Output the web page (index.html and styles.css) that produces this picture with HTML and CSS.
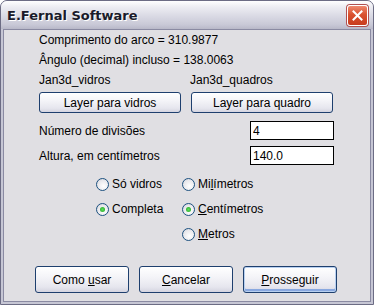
FILE: index.html
```html
<html lang="pt">
  <head>
    <meta charset="UTF-8" />
    <title>E.Fernal Software</title>
    <link rel="stylesheet" href="styles.css">
  </head>
  <body>
    <div class="window">
      <div class="titlebar">
        <span class="title">E.Fernal Software</span>
        <span class="close">
          <svg width="11" height="11" viewBox="0 0 11 11">
            <path d="M1.5 1.5 L9.5 9.5 M9.5 1.5 L1.5 9.5" stroke="#fff" stroke-width="2" stroke-linecap="square" />
          </svg>
        </span>
      </div>

      <div class="client">
        <div class="line">Comprimento do arco = 310.9877</div>
        <div class="line">Ângulo (decimal) incluso = 138.0063</div>
        <div class="pair">
          <div class="line">Jan3d_vidros</div>
          <div class="line">Jan3d_quadros</div>
        </div>
        <div class="pair">
          <button class="btn layer">Layer para vidros</button>
          <button class="btn layer">Layer para quadro</button>
        </div>

        <div class="field first">
          <span>Número de divisões</span>
          <input type="text" value="4" />
        </div>
        <div class="field">
          <span>Altura, em centímetros</span>
          <input type="text" value="140.0" />
        </div>

        <div class="options">
          <label class="radio"><span class="dot"></span><span>Só vidros</span></label>
          <label class="radio"><span class="dot"></span><span>Mi<u>l</u>ímetros</span></label>
          <label class="radio"><span class="dot on"></span><span>Completa</span></label>
          <label class="radio"><span class="dot on"></span><span><u>C</u>entímetros</span></label>
          <span></span>
          <label class="radio"><span class="dot"></span><span><u>M</u>etros</span></label>
        </div>

        <div class="actions">
          <button class="btn big">Como <u>u</u>sar</button>
          <button class="btn big"><u>C</u>ancelar</button>
          <button class="btn big default"><u>P</u>rosseguir</button>
        </div>
      </div>
    </div>
  </body>
</html>
```

FILE: styles.css
```css
body {
  background-color: #fff;
  margin: 0;
}

.window {
  background-color: #c6c6d4;
  border: 1px solid #6c6c84;
  border-radius: 7px 7px 0 0;
  box-sizing: border-box;
  display: flex;
  flex-direction: column;
  font-family: "Liberation Sans", Arial, sans-serif;
  font-size: 12px;
  height: 305px;
  overflow: hidden;
  width: 374px;
}

.titlebar {
  align-items: center;
  background: linear-gradient(#ffffff, #eeeef3 20%, #dcdce6 50%, #c8c8d6 85%, #b8b8c8);
  display: flex;
  height: 28px;
  justify-content: space-between;
  padding: 0 5px 0 6px;
}

.title {
  color: #1a1a2a;
  font-family: "DejaVu Sans", sans-serif;
  font-size: 13px;
  font-weight: bold;
  text-shadow: 1px 1px 0 #fff;
}

.close {
  align-items: center;
  background: linear-gradient(#ee8a70, #d9512f 45%, #c83c1e);
  border: 1px solid #fff;
  border-radius: 3px;
  box-shadow: 0 0 0 1px #b05050;
  display: flex;
  height: 19px;
  justify-content: center;
  width: 19px;
}

.client {
  background-color: #e0dfe3;
  border: 1px solid #8a8aa2;
  flex: 1;
  margin: 0 2px 2px;
  padding: 0 0 0 35px;
}

.line {
  height: 20px;
  line-height: 20px;
}

.pair {
  display: flex;
  gap: 10px;
}

.pair .line {
  width: 141px;
}

.btn {
  background: linear-gradient(#ffffff, #f4f4f8 40%, #e6e6ee 80%, #d4d4e0);
  border: 1px solid #1e3f6e;
  border-radius: 3px;
  color: #000;
  font-family: "Liberation Sans", Arial, sans-serif;
  font-size: 12px;
  padding: 0;
}

.layer {
  height: 21px;
  margin-top: 2px;
  width: 142px;
}

.field {
  align-items: center;
  display: flex;
  height: 19px;
  justify-content: space-between;
  margin-top: 6px;
  width: 295px;
}

.field.first {
  margin-top: 8px;
}

.field input {
  border: 1px solid #000;
  box-sizing: border-box;
  font-family: "Liberation Sans", Arial, sans-serif;
  font-size: 12px;
  height: 19px;
  padding: 0 2px;
  width: 84px;
}

.options {
  display: grid;
  grid-template-columns: 86px auto;
  grid-auto-rows: 20px;
  row-gap: 5px;
  margin: 9px 0 0 57px;
}

.radio {
  align-items: center;
  display: flex;
  gap: 3px;
}

.dot {
  background: radial-gradient(circle at 60% 65%, #fff, #e8e8ec 60%, #c8c8d0);
  border: 1px solid #1c5180;
  border-radius: 50%;
  box-sizing: border-box;
  display: inline-block;
  height: 13px;
  position: relative;
  width: 13px;
}

.dot.on::after {
  background: radial-gradient(circle, #5ce05c, #21a121);
  border-radius: 50%;
  content: "";
  height: 5px;
  left: 3px;
  position: absolute;
  top: 3px;
  width: 5px;
}

.actions {
  display: flex;
  gap: 10px;
  margin: 22px 0 0 -4px;
}

.big {
  height: 27px;
  width: 94px;
}

.default {
  box-shadow: inset 0 0 0 1px #b8d0f0, inset 0 -2px 0 1px #89a8e0;
}
```
